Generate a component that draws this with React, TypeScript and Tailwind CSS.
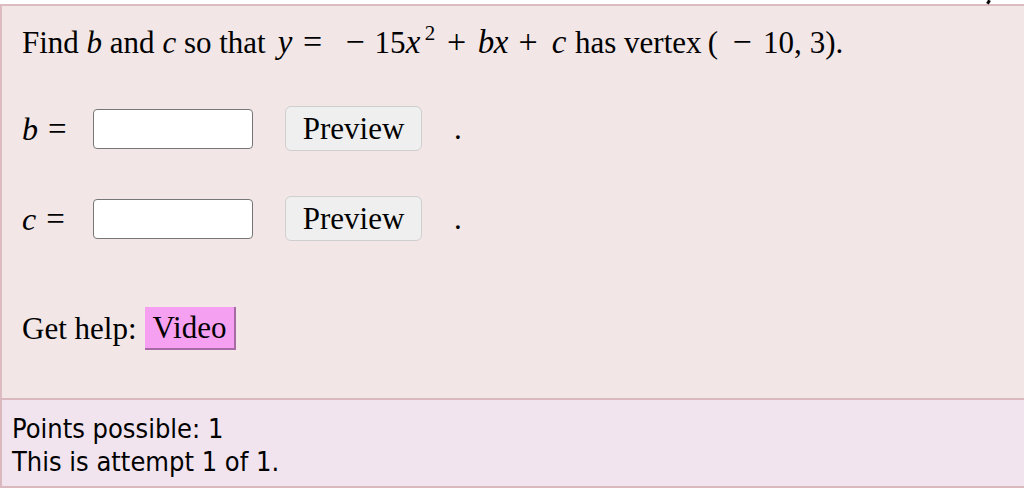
import React from "react";

const serif = { fontFamily: '"Liberation Serif", "Times New Roman", serif' };

function T({ w, children, cls = "" }: { w: string; children: React.ReactNode; cls?: string }) {
  return <span className={`inline-flex justify-center shrink-0 ${w} ${cls}`}>{children}</span>;
}

function AnswerRow({ label }: { label: string }) {
  return (
    <div className="flex items-center h-[45px]">
      <div className="w-[71px] flex items-center">
        <span className="italic text-[32px]">{label}</span>
        <span className="ml-[10px] text-[33px]">=</span>
      </div>
      <div className="w-[160px] h-[40px] bg-white border border-[#767676] rounded-[4px]" />
      <div className="ml-[32px] w-[137px] h-[45px] bg-[#efefef] border border-[#cfcfcf] rounded-[6px] flex items-center justify-center">
        Preview
      </div>
      <span className="ml-[32px]">.</span>
    </div>
  );
}

export default function App() {
  return (
    <div className="w-[1024px] h-[493px] bg-white relative overflow-hidden" style={serif}>
      <div className="absolute left-[987px] top-0 w-[3px] h-[4px] bg-black rotate-[30deg]" />
      <div className="pt-[4px] h-full">
        <div className="border-t-2 border-l-2 border-[#dcbcc0] bg-[#f2e6e7] h-[394px] pl-[20px] pt-[18px] text-[31px] text-black leading-[36px]">
          <div className="flex items-baseline whitespace-pre">
            <span className="inline-block w-[253px] shrink-0">
              Find <span className="italic">b</span> and <span className="italic">c</span> so that
            </span>
            <T w="w-[20px]" cls="italic text-[33px]">y</T>
            <T w="w-[21px] ml-[7px]" cls="text-[34px]">=</T>
            <T w="w-[20px] ml-[22px]" cls="text-[34px]">−</T>
            <T w="w-[26px] ml-[12px]">15</T>
            <T w="w-[20px]" cls="italic text-[33px]">x</T>
            <T w="w-[10px] ml-[2px] relative -top-[13px]" cls="text-[21px]">2</T>
            <T w="w-[17px] ml-[13px]" cls="text-[34px]">+</T>
            <T w="w-[12px] ml-[15px]" cls="italic text-[33px]">b</T>
            <T w="w-[18px]" cls="italic text-[33px]">x</T>
            <T w="w-[20px] ml-[8px]" cls="text-[34px]">+</T>
            <T w="w-[18px] ml-[12px]" cls="italic text-[33px]">c</T>
            <span className="ml-[7px] inline-block w-[128px] shrink-0">has vertex</span>
            <T w="w-[10px] ml-[5px]">(</T>
            <T w="w-[20px] ml-[14px]" cls="text-[34px]">−</T>
            <span className="ml-[11px]">10,</span>
            <span className="ml-[8px]">3).</span>
          </div>
          <div className="mt-[42px] flex flex-col gap-[45px]">
            <AnswerRow label="b" />
            <AnswerRow label="c" />
          </div>
          <div className="mt-[66px] flex items-center">
            <span>Get help:</span>
            <span className="ml-[8px] h-[43px] px-[8px] flex items-center bg-[#f6a0f1] border-r-2 border-b-2 border-[#a86aa4]">
              Video
            </span>
          </div>
        </div>
        <div
          className="border-t-2 border-b-2 border-l-2 border-[#d9b9bd] bg-[#f1e4ee] h-[90px] pl-[10px] pt-[12px] text-[27px] leading-[33px] text-black"
          style={{ fontFamily: '"DejaVu Sans Condensed", "DejaVu Sans", sans-serif', fontStretch: "condensed" }}
        >
          <div>Points possible: 1</div>
          <div>This is attempt 1 of 1.</div>
        </div>
      </div>
    </div>
  );
}
